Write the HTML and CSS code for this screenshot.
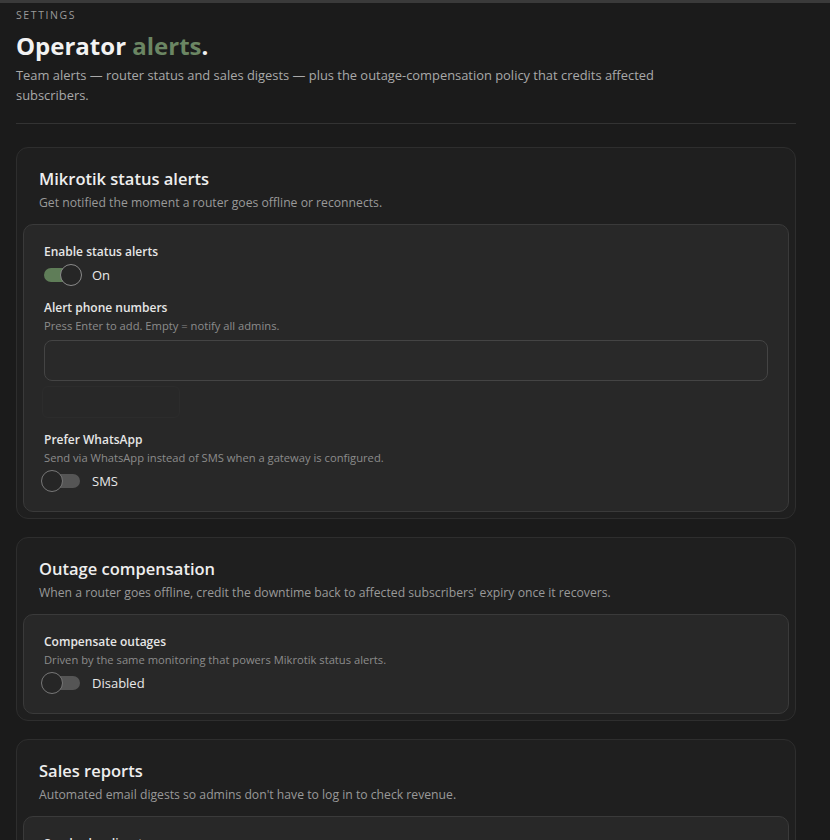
FILE: index.html
```html
<!DOCTYPE html>
<html lang="en">
<head>
    <meta charset="UTF-8">
    <meta name="viewport" content="width=device-width, initial-scale=1.0">
    <title>Operator alerts</title>
    <link rel="stylesheet" href="styles.css">
</head>
<body>
    <div class="page">
        <p class="eyebrow">SETTINGS</p>
        <h1 class="title">Operator <span class="accent">alerts</span>.</h1>
        <p class="lead">Team alerts — router status and sales digests — plus the outage-compensation policy that credits affected subscribers.</p>
        <hr class="divider">

        <section class="card">
            <div class="card-head">
                <h2>Mikrotik status alerts</h2>
                <p>Get notified the moment a router goes offline or reconnects.</p>
            </div>
            <div class="panel">
                <div class="field">
                    <label class="field-label">Enable status alerts</label>
                    <div class="switch-row">
                        <span class="toggle on"><span class="track"></span><span class="knob"></span></span>
                        <span class="switch-text">On</span>
                    </div>
                </div>
                <div class="field">
                    <label class="field-label">Alert phone numbers</label>
                    <p class="hint">Press Enter to add. Empty = notify all admins.</p>
                    <input class="text-input" type="text">
                    <div class="ghost-btn"></div>
                </div>
                <div class="field">
                    <label class="field-label">Prefer WhatsApp</label>
                    <p class="hint">Send via WhatsApp instead of SMS when a gateway is configured.</p>
                    <div class="switch-row">
                        <span class="toggle"><span class="track"></span><span class="knob"></span></span>
                        <span class="switch-text">SMS</span>
                    </div>
                </div>
            </div>
        </section>

        <section class="card">
            <div class="card-head">
                <h2>Outage compensation</h2>
                <p>When a router goes offline, credit the downtime back to affected subscribers' expiry once it recovers.</p>
            </div>
            <div class="panel">
                <div class="field">
                    <label class="field-label">Compensate outages</label>
                    <p class="hint">Driven by the same monitoring that powers Mikrotik status alerts.</p>
                    <div class="switch-row">
                        <span class="toggle"><span class="track"></span><span class="knob"></span></span>
                        <span class="switch-text">Disabled</span>
                    </div>
                </div>
            </div>
        </section>

        <section class="card">
            <div class="card-head">
                <h2>Sales reports</h2>
                <p>Automated email digests so admins don't have to log in to check revenue.</p>
            </div>
            <div class="panel">
                <div class="field">
                    <label class="field-label">Send sales digests</label>
                    <p class="hint">Daily and weekly revenue summaries by email.</p>
                </div>
            </div>
        </section>
    </div>
</body>
</html>
```

FILE: styles.css
```css
body{
    margin:0px;
    background-color:#1b1b1b;
    color:#e8e8e8;
    font-family:'Open Sans', 'Noto Sans', sans-serif;
    border-top:3px solid #3a3a3a;
}
.page{
    width:780px;
    padding:0 16px 40px 16px;
}
.eyebrow{
    margin:5px 0 0 0;
    font-size:10.5px;
    letter-spacing:1.6px;
    color:#9a9a9a;
    line-height:14px;
}
.title{
    margin:8px 0 0 0;
    font-size:24px;
    font-weight:700;
    line-height:32px;
    color:#f2f2f2;
}
.accent{
    color:#6b8663;
}
.lead{
    margin:3px 0 0 0;
    max-width:650px;
    font-size:12.9px;
    line-height:20px;
    color:#a9a9a9;
}
.divider{
    margin:18px 0 23px 0;
    border:none;
    border-top:1px solid #333;
}
.card{
    background-color:#1f1f1f;
    border:1px solid #2e2e2e;
    border-radius:12px;
    padding:0 6px 6px 6px;
    margin-bottom:18px;
}
.card-head{
    padding:19px 16px 11px 16px;
}
.card-head h2{
    margin:0;
    font-size:16.5px;
    font-weight:600;
    line-height:24px;
    color:#eeeeee;
}
.card-head p{
    margin:2px 0 0 0;
    font-size:12.2px;
    line-height:20px;
    color:#999;
}
.panel{
    background-color:#282828;
    border:1px solid #3a3a3a;
    border-radius:10px;
    padding:18px 20px 18px 20px;
}
.field{
    margin-bottom:12px;
}
.field:last-child{
    margin-bottom:0;
}
.field-label{
    display:block;
    font-size:12px;
    font-weight:600;
    line-height:18px;
    color:#e6e6e6;
}
.hint{
    margin:0;
    font-size:11.2px;
    line-height:18px;
    color:#8c8c8c;
}
.text-input{
    display:block;
    box-sizing:border-box;
    width:100%;
    height:41px;
    margin-top:5px;
    background-color:#292929;
    border:1.5px solid #444;
    border-radius:8px;
    outline:none;
}
.ghost-btn{
    width:136px;
    height:30px;
    margin:5px 0 13px -2px;
    border:1px solid #2c2c2c;
    border-radius:6px;
}
.switch-row{
    display:flex;
    align-items:center;
    gap:11px;
    margin-top:2px;
    height:24px;
}
.toggle{
    position:relative;
    display:inline-block;
    width:40px;
    height:24px;
    margin-left:-3px;
}
.track{
    position:absolute;
    left:3px;
    top:5px;
    width:36px;
    height:14px;
    border-radius:7px;
    background-color:#555;
}
.knob{
    position:absolute;
    left:0;
    top:1px;
    box-sizing:border-box;
    width:22px;
    height:22px;
    border-radius:50%;
    background-color:#262626;
    border:1.5px solid #777;
}
.toggle.on .track{
    background-color:#5f7d58;
}
.toggle.on .knob{
    left:19px;
    border-color:#8a8a8a;
}
.switch-text{
    font-size:13px;
    color:#e8e8e8;
}
```
